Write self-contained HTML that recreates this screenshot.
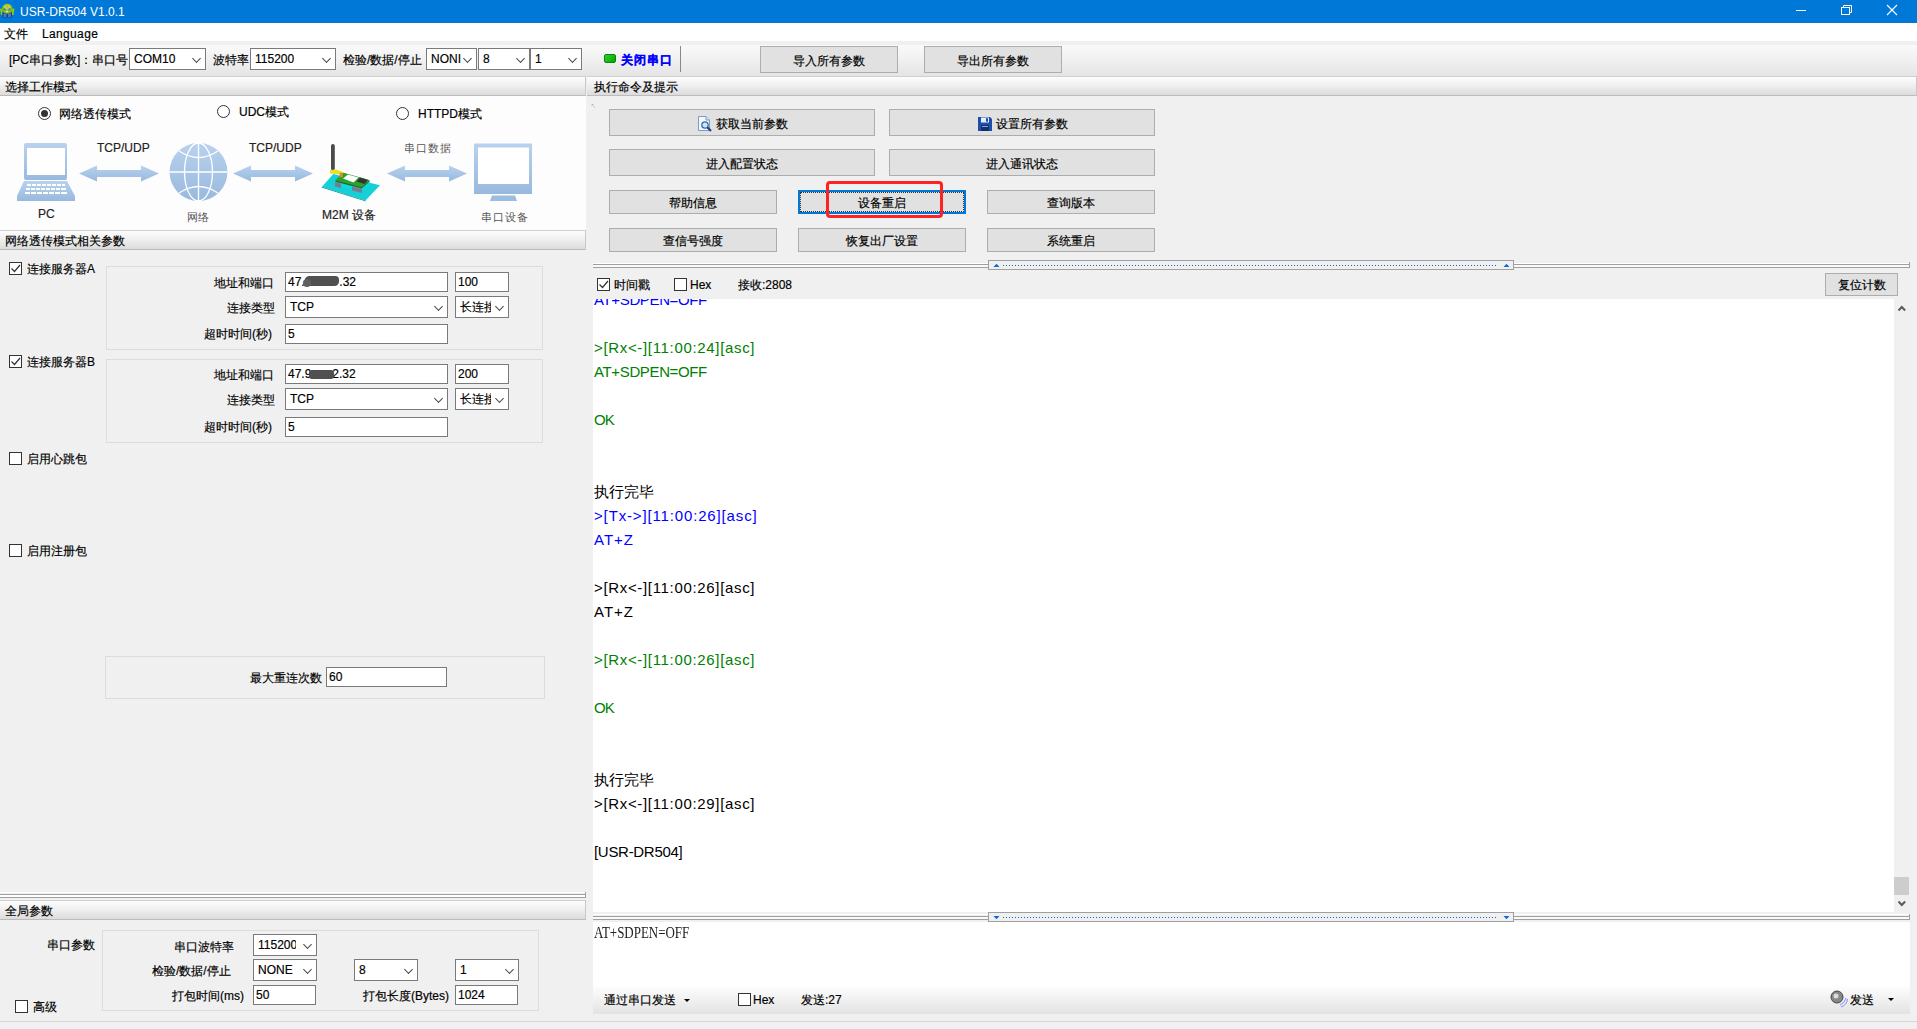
<!DOCTYPE html>
<html><head><meta charset="utf-8">
<style>
*{box-sizing:border-box;margin:0;padding:0}
html,body{width:1917px;height:1029px;overflow:hidden;background:#f0f0f0;font-family:"Liberation Sans",sans-serif;font-size:12px;color:#000;-webkit-text-stroke:.18px}
.a{position:absolute}
.t{position:absolute;white-space:nowrap;line-height:16px}
.hdr{position:absolute;height:20px;background:linear-gradient(#fdfdfd,#f0f0f0 45%,#dcdcdc);border-top:1px solid #d0d0d0;border-bottom:1px solid #bcbcbc;border-right:1px solid #c8c8c8}
.hdr span{position:absolute;left:5px;top:3px;line-height:15px}
.btn{position:absolute;background:#e1e1e1;border:1px solid #adadad;text-align:center;line-height:24px}
.inp{position:absolute;background:#fff;border:1px solid #7a7a7a;line-height:19px;padding-left:2px}
.cmb{position:absolute;background:#fff;border:1px solid #7a7a7a;line-height:20px;padding-left:4px;overflow:hidden;white-space:nowrap}
.cmb i{position:absolute;right:5px;top:6px;width:7px;height:7px;border-right:1px solid #444;border-bottom:1px solid #444;transform:rotate(45deg) scale(.9)}
.chk{position:absolute;width:13px;height:13px;border:1px solid #333;background:#fff}
.grp{position:absolute;border:1px solid #dcdcdc}
.log{position:absolute;left:594px;white-space:nowrap;font-size:15px;line-height:24px;-webkit-text-stroke:0}
.g{color:#008000}.b{color:#0000ff}
</style></head><body>
<!-- title bar -->
<div class="a" style="left:0;top:0;width:1917px;height:23px;background:#0078d7"></div>
<div class="t" style="left:20px;top:4px;color:#fff;font-size:12px;-webkit-text-stroke:0">USR-DR504 V1.0.1</div>
<svg class="a" style="left:0;top:0" width="16" height="20" viewBox="0 0 16 20">
<path d="M0 9 Q1 8 2.5 9.5 V15 L1 15 Z" fill="#8cc820"/>
<path d="M14.5 9 Q13.5 8 12 9.5 V15 L13.5 15 Z" fill="#8cc820"/>
<rect x="2.5" y="12" width="9.5" height="5.5" rx="1" fill="#1a3f8a"/>
<rect x="3.5" y="13.5" width="3" height="3.5" fill="#4a7ac0"/><rect x="8" y="13.5" width="3" height="3.5" fill="#4a7ac0"/>
<ellipse cx="7.3" cy="8.8" rx="5.3" ry="5" fill="#7cc010"/>
<ellipse cx="7.3" cy="7" rx="3.5" ry="2.5" fill="#a8dc50"/>
<rect x="6.3" y="4" width="2" height="3.8" rx="1" fill="#f0a030"/>
<circle cx="4.5" cy="9.3" r="1" fill="#6a5ad0"/><circle cx="9.5" cy="9.3" r="1" fill="#6a5ad0"/>
<ellipse cx="7" cy="11.5" rx="1.4" ry=".7" fill="#e8e0f0"/>
</svg>
<svg class="a" style="left:1790px;top:0" width="120" height="23">
<line x1="6" y1="10.5" x2="16" y2="10.5" stroke="#fff" stroke-width="1"/>
<rect x="51.5" y="7.5" width="8" height="7" fill="none" stroke="#fff" stroke-width="1"/>
<path d="M53.5 7.5 V5.5 H61.5 V12.5 H59.5" fill="none" stroke="#fff" stroke-width="1"/>
<path d="M97 5 L107 15 M107 5 L97 15" stroke="#fff" stroke-width="1.1"/>
</svg>
<!-- menu -->
<div class="a" style="left:0;top:23px;width:1917px;height:18px;background:#fff"></div>
<div class="t" style="left:4px;top:26px">文件</div>
<div class="t" style="left:42px;top:26px;letter-spacing:.35px">Language</div>
<!-- toolbar -->
<div class="a" style="left:0;top:45px;width:1917px;height:31px;background:linear-gradient(#fafafa,#f0f0f0 50%,#e4e4e4)"></div>
<div class="t" style="left:9px;top:52px">[PC串口参数]：串口号</div>
<div class="cmb" style="left:129px;top:48px;width:77px;height:22px">COM10<i></i></div>
<div class="t" style="left:213px;top:52px">波特率</div>
<div class="cmb" style="left:250px;top:48px;width:86px;height:22px">115200<i></i></div>
<div class="t" style="left:343px;top:52px">检验/数据/停止</div>
<div class="cmb" style="left:426px;top:48px;width:51px;height:22px">NONI<i></i></div>
<div class="cmb" style="left:478px;top:48px;width:52px;height:22px">8<i></i></div>
<div class="cmb" style="left:530px;top:48px;width:52px;height:22px">1<i></i></div>
<div class="a" style="left:604px;top:54px;width:12px;height:9px;background:linear-gradient(135deg,#3c3,#0a0);border-radius:2px;border:1px solid #080"></div>
<div class="t" style="left:621px;top:52px;color:#0000ff;font-weight:bold;letter-spacing:1px">关闭串口</div>
<div class="a" style="left:680px;top:46px;width:1px;height:26px;background:#888"></div>
<div class="btn" style="left:760px;top:46px;width:138px;height:27px;line-height:28px">导入所有参数</div>
<div class="btn" style="left:924px;top:46px;width:138px;height:27px;line-height:28px">导出所有参数</div>

<!-- left headers -->
<div class="hdr" style="left:0;top:76px;width:586px"><span>选择工作模式</span></div>
<div class="a" style="left:0;top:96px;width:586px;height:135px;background:#fdfdfd"></div>

<!-- radios -->
<div class="a" style="left:38px;top:107px;width:13px;height:13px;border:1px solid #333;border-radius:50%;background:#fff"></div>
<div class="a" style="left:41px;top:110px;width:7px;height:7px;border-radius:50%;background:#333"></div>
<div class="t" style="left:59px;top:106px">网络透传模式</div>
<div class="a" style="left:217px;top:105px;width:13px;height:13px;border:1px solid #333;border-radius:50%;background:#fff"></div>
<div class="t" style="left:239px;top:104px">UDC模式</div>
<div class="a" style="left:396px;top:107px;width:13px;height:13px;border:1px solid #333;border-radius:50%;background:#fff"></div>
<div class="t" style="left:418px;top:106px">HTTPD模式</div>
<svg class="a" style="left:0;top:96px" width="586" height="134" viewBox="0 96 586 134">
<defs>
<linearGradient id="bl" x1="0" y1="0" x2="0" y2="1"><stop offset="0" stop-color="#b9d2ee"/><stop offset="1" stop-color="#98b9de"/></linearGradient>
</defs>
<!-- laptop -->
<rect x="24" y="143" width="43" height="37" rx="2" fill="url(#bl)"/>
<rect x="27" y="148" width="38" height="27" fill="#fff"/>
<path d="M24 181 H67 L75 196 V201 H17 V196 Z" fill="url(#bl)"/>
<g fill="#fff">
<rect x="27" y="184" width="4" height="2"/><rect x="32" y="184" width="4" height="2"/><rect x="37" y="184" width="4" height="2"/><rect x="42" y="184" width="4" height="2"/><rect x="47" y="184" width="4" height="2"/><rect x="52" y="184" width="4" height="2"/><rect x="57" y="184" width="4" height="2"/><rect x="62" y="184" width="3" height="2"/>
<rect x="26" y="188" width="4" height="2"/><rect x="31" y="188" width="4" height="2"/><rect x="36" y="188" width="4" height="2"/><rect x="41" y="188" width="4" height="2"/><rect x="46" y="188" width="4" height="2"/><rect x="51" y="188" width="4" height="2"/><rect x="56" y="188" width="4" height="2"/><rect x="61" y="188" width="5" height="2"/>
<rect x="25" y="192" width="5" height="2"/><rect x="31" y="192" width="5" height="2"/><rect x="37" y="192" width="5" height="2"/><rect x="43" y="192" width="5" height="2"/><rect x="49" y="192" width="5" height="2"/><rect x="55" y="192" width="5" height="2"/><rect x="61" y="192" width="6" height="2"/>
<rect x="34" y="180" width="24" height="1"/>
</g>
<!-- arrows -->
<path d="M79 173.5 L97 165.5 V170 H141 V165.5 L159 173.5 L141 181.5 V177 H97 V181.5 Z" fill="url(#bl)"/>
<path d="M233 173.5 L251 165.5 V170 H295 V165.5 L313 173.5 L295 181.5 V177 H251 V181.5 Z" fill="url(#bl)"/>
<path d="M387 173.5 L405 165.5 V170 H449 V165.5 L467 173.5 L449 181.5 V177 H405 V181.5 Z" fill="url(#bl)"/>
<!-- globe -->
<circle cx="198.5" cy="172" r="29" fill="url(#bl)"/>
<g fill="none" stroke="#fff" stroke-width="1.3">
<line x1="198.5" y1="143" x2="198.5" y2="201"/>
<line x1="169.5" y1="172" x2="227.5" y2="172"/>
<ellipse cx="198.5" cy="172" rx="14" ry="29"/>
<path d="M179 151 Q198.5 164 218 151"/>
<path d="M179 193 Q198.5 180 218 193"/>
</g>
<!-- M2M device -->
<path d="M333.3 174 L322 186.7 L365.5 200.5 L380 185.2 Z" fill="#16d0d8"/>
<path d="M322 186.7 L365.5 200.5 L366 201.5 L321.5 187.5 Z" fill="#0a9aa0"/>
<path d="M335 181 L361.5 187.5 L369.5 181 V184 L361.5 192 L335 185 Z" fill="#10d8e0"/>
<path d="M335 182 L341 183.5 V188 L335 186.5 Z" fill="#7a7a90"/>
<path d="M352 186.5 L362 189 V193 L352 190.5 Z" fill="#7a7a90"/>
<path d="M335.5 180.3 L342.8 172.5 L369.5 180 L361.8 187 Z" fill="#2ea02e"/>
<path d="M335.5 180.3 L361.8 187 V188.5 L335.5 181.8 Z" fill="#1d701d"/>
<path d="M361.8 187 L369.5 180 V181.5 L361.8 188.5 Z" fill="#1d701d"/>
<path d="M343 178.5 L348 174.5 L358.5 177.5 L353.5 182.5 Z" fill="#fbfbfb"/>
<path d="M356.5 181.5 L360 177.5 L368 180 L364.5 184 Z" fill="#333"/>
<rect x="331" y="144" width="3.8" height="26.5" rx="1.9" fill="#4a4a4a"/>
<path d="M330 170 L336 169.5 L343 172 L343 174.5 L336 174 L330 173.5 Z" fill="#e8e020"/>
<rect x="339.6" y="172.8" width="3.2" height="4.5" fill="#d88a28"/>
<!-- monitor -->
<rect x="474" y="143.5" width="58" height="50.5" fill="url(#bl)"/>
<rect x="478" y="147.5" width="51" height="36.5" fill="#fff"/>
<path d="M492 195.5 H515 L517 201 H490 Z" fill="#9dbde0"/>
</svg>
<div class="t" style="left:97px;top:140px;font-size:12px;color:#222">TCP/UDP</div>
<div class="t" style="left:249px;top:140px;font-size:12px;color:#222">TCP/UDP</div>
<div class="t" style="left:404px;top:140px;font-size:11px;color:#555;letter-spacing:1px;-webkit-text-stroke:0">串口数据</div>
<div class="t" style="left:38px;top:206px;font-size:12px;color:#222">PC</div>
<div class="t" style="left:187px;top:209px;font-size:11px;color:#555;-webkit-text-stroke:0">网络</div>
<div class="t" style="left:322px;top:207px;font-size:12px;color:#222">M2M 设备</div>
<div class="t" style="left:481px;top:209px;font-size:11px;color:#555;letter-spacing:1px;-webkit-text-stroke:0">串口设备</div>
<div class="hdr" style="left:0;top:230px;width:586px"><span>网络透传模式相关参数</span></div>
<div class="hdr" style="left:0;top:900px;width:586px"><span>全局参数</span></div>


<!-- server A -->
<div class="chk" style="left:9px;top:262px"><svg width="11" height="11" style="position:absolute;left:0;top:0"><path d="M1.5 5.5 L4.5 8.5 L10 2" fill="none" stroke="#333" stroke-width="1.2"/></svg></div>
<div class="t" style="left:27px;top:261px">连接服务器A</div>
<div class="grp" style="left:106px;top:266px;width:437px;height:84px"></div>
<div class="t" style="left:214px;top:275px">地址和端口</div>
<div class="inp" style="left:285px;top:272px;width:163px;height:20px">47.9<span style="display:inline-block;width:28px"></span>.32</div>
<div class="a" style="left:305px;top:276px;width:34px;height:10px;background:#505050;border-radius:5px 4px 5px 6px;filter:blur(.7px)"></div>
<div class="a" style="left:303px;top:279px;width:8px;height:8px;background:#606060;border-radius:50%;filter:blur(.6px)"></div>
<div class="inp" style="left:455px;top:272px;width:54px;height:20px">100</div>
<div class="t" style="left:227px;top:300px">连接类型</div>
<div class="cmb" style="left:285px;top:296px;width:163px;height:22px">TCP<i></i></div>
<div class="cmb" style="left:455px;top:296px;width:54px;height:22px;padding-left:4px"><span style="display:inline-block;width:31px;overflow:hidden">长连接</span><i></i></div>
<div class="t" style="left:204px;top:326px">超时时间(秒)</div>
<div class="inp" style="left:285px;top:324px;width:163px;height:20px">5</div>
<!-- server B -->
<div class="chk" style="left:9px;top:355px"><svg width="11" height="11" style="position:absolute;left:0;top:0"><path d="M1.5 5.5 L4.5 8.5 L10 2" fill="none" stroke="#333" stroke-width="1.2"/></svg></div>
<div class="t" style="left:27px;top:354px">连接服务器B</div>
<div class="grp" style="left:106px;top:359px;width:437px;height:84px"></div>
<div class="t" style="left:214px;top:367px">地址和端口</div>
<div class="inp" style="left:285px;top:364px;width:163px;height:20px">47.9<span style="display:inline-block;width:21px"></span>2.32</div>
<div class="a" style="left:309px;top:370px;width:25px;height:9px;background:#505050;border-radius:3px;filter:blur(.5px)"></div>
<div class="inp" style="left:455px;top:364px;width:54px;height:20px">200</div>
<div class="t" style="left:227px;top:392px">连接类型</div>
<div class="cmb" style="left:285px;top:388px;width:163px;height:22px">TCP<i></i></div>
<div class="cmb" style="left:455px;top:388px;width:54px;height:22px;padding-left:4px"><span style="display:inline-block;width:31px;overflow:hidden">长连接</span><i></i></div>
<div class="t" style="left:204px;top:419px">超时时间(秒)</div>
<div class="inp" style="left:285px;top:417px;width:163px;height:20px">5</div>
<!-- heartbeat / register -->
<div class="chk" style="left:9px;top:452px"></div>
<div class="t" style="left:27px;top:451px">启用心跳包</div>
<div class="chk" style="left:9px;top:544px"></div>
<div class="t" style="left:27px;top:543px">启用注册包</div>
<!-- max reconnect -->
<div class="grp" style="left:105px;top:656px;width:440px;height:43px"></div>
<div class="t" style="left:250px;top:670px">最大重连次数</div>
<div class="inp" style="left:326px;top:667px;width:121px;height:20px">60</div>
<!-- splitter -->
<div class="a" style="left:0;top:892px;width:586px;height:1px;background:#fff"></div>
<div class="a" style="left:0;top:894px;width:586px;height:1px;background:#a0a0a0"></div>
<div class="a" style="left:0;top:895px;width:586px;height:2px;background:#fff"></div>
<div class="a" style="left:0;top:897px;width:586px;height:1px;background:#a0a0a0"></div>
<div class="a" style="left:585px;top:892px;width:1px;height:6px;background:#a0a0a0"></div>
<!-- global -->
<div class="t" style="left:47px;top:937px">串口参数</div>
<div class="grp" style="left:102px;top:930px;width:437px;height:81px"></div>
<div class="t" style="left:174px;top:939px">串口波特率</div>
<div class="cmb" style="left:253px;top:934px;width:64px;height:22px;padding-left:4px"><span style="display:inline-block;width:38px;overflow:hidden;vertical-align:top">115200</span><i></i></div>
<div class="t" style="left:152px;top:963px">检验/数据/停止</div>
<div class="cmb" style="left:253px;top:959px;width:64px;height:22px">NONE<i></i></div>
<div class="cmb" style="left:354px;top:959px;width:64px;height:22px">8<i></i></div>
<div class="cmb" style="left:455px;top:959px;width:64px;height:22px">1<i></i></div>
<div class="t" style="left:172px;top:988px">打包时间(ms)</div>
<div class="inp" style="left:253px;top:985px;width:63px;height:20px">50</div>
<div class="t" style="left:363px;top:988px">打包长度(Bytes)</div>
<div class="inp" style="left:455px;top:985px;width:63px;height:20px">1024</div>
<div class="chk" style="left:15px;top:1000px"></div>
<div class="t" style="left:33px;top:999px">高级</div>
<div class="a" style="left:0;top:1021px;width:1917px;height:1px;background:#d6d6d6"></div>
<!-- right header -->
<div class="hdr" style="left:587px;top:76px;width:1330px"><span style="left:7px">执行命令及提示</span></div>


<!-- command buttons -->
<svg class="a" style="left:591px;top:103px" width="6" height="6"><path d="M1 3 V1.5 H2.5 M2.5 3 L4 4.5" fill="none" stroke="#aaa" stroke-width=".8"/></svg>
<div class="btn" style="left:609px;top:109px;width:266px;height:27px;line-height:28px"><svg width="16" height="17" style="vertical-align:-4px;margin-right:3px" viewBox="0 0 16 17"><path d="M1.5 1.5 H9 L12.5 5 V15.5 H1.5 Z" fill="#f4f8fc" stroke="#7a9cc8"/><path d="M9 1.5 V5 H12.5" fill="#dde8f4" stroke="#7a9cc8"/><circle cx="8" cy="10" r="3.2" fill="#cde6f8" stroke="#3a6ab0" stroke-width="1.3"/><path d="M10.3 12.3 L14 16" stroke="#1e3f8a" stroke-width="2.2"/></svg>获取当前参数</div>
<div class="btn" style="left:889px;top:109px;width:266px;height:27px;line-height:28px"><svg width="16" height="16" style="vertical-align:-4px;margin-right:3px" viewBox="0 0 16 16"><path d="M1 1 H13 L15 3 V15 H1 Z" fill="#1d4fa8"/><rect x="4" y="1.5" width="8" height="5" fill="#e8eef8"/><rect x="4" y="9" width="8" height="6" fill="#0f2f70"/><rect x="9" y="2.2" width="2" height="3.5" fill="#1d4fa8"/><rect x="5" y="10" width="6" height="1" fill="#8aa8d8"/></svg>设置所有参数</div>
<div class="btn" style="left:609px;top:149px;width:266px;height:27px;line-height:28px">进入配置状态</div>
<div class="btn" style="left:889px;top:149px;width:266px;height:27px;line-height:28px">进入通讯状态</div>
<div class="btn" style="left:609px;top:190px;width:168px;height:24px">帮助信息</div>
<div class="btn" style="left:798px;top:190px;width:168px;height:24px;border:2px solid #0078d7;line-height:22px"><div class="a" style="left:0;top:0;right:0;bottom:0;border:1px dotted #333"></div>设备重启</div>
<div class="btn" style="left:987px;top:190px;width:168px;height:24px">查询版本</div>
<div class="btn" style="left:609px;top:228px;width:168px;height:24px">查信号强度</div>
<div class="btn" style="left:798px;top:228px;width:168px;height:24px">恢复出厂设置</div>
<div class="btn" style="left:987px;top:228px;width:168px;height:24px">系统重启</div>
<!-- red highlight -->
<div class="a" style="left:826px;top:181px;width:117px;height:37px;border:3px solid #f22;border-radius:4px"></div>
<!-- top splitter -->
<div class="a" style="left:593px;top:263px;width:1317px;height:1px;background:#fff"></div>
<div class="a" style="left:593px;top:264px;width:1317px;height:1px;background:#a0a0a0"></div>
<div class="a" style="left:593px;top:265px;width:1317px;height:2px;background:#fafafa"></div>
<div class="a" style="left:593px;top:267px;width:1317px;height:1px;background:#a0a0a0"></div>
<div class="a" style="left:1909px;top:262px;width:1px;height:6px;background:#a0a0a0"></div>
<div class="a" style="left:988px;top:260px;width:526px;height:10px;background:#f0f0f0;border:1px solid #a0a0a0"></div>
<div class="a" style="left:1003px;top:265px;width:494px;height:1px;background:repeating-linear-gradient(90deg,#0a6ad8 0,#0a6ad8 1px,transparent 1px,transparent 3px)"></div>
<svg class="a" style="left:993px;top:263px" width="8" height="5"><path d="M0.5 4 H6.5 L3.5 0.8 Z" fill="#0a6ad8"/></svg>
<svg class="a" style="left:1503px;top:263px" width="8" height="5"><path d="M0.5 4 H6.5 L3.5 0.8 Z" fill="#0a6ad8"/></svg>
<!-- receive toolbar -->
<div class="chk" style="left:597px;top:278px"><svg width="11" height="11" style="position:absolute;left:0;top:0"><path d="M1.5 5.5 L4.5 8.5 L10 2" fill="none" stroke="#333" stroke-width="1.2"/></svg></div>
<div class="t" style="left:614px;top:277px">时间戳</div>
<div class="chk" style="left:674px;top:278px"></div>
<div class="t" style="left:690px;top:277px">Hex</div>
<div class="t" style="left:738px;top:277px">接收:2808</div>
<div class="btn" style="left:1825px;top:273px;width:73px;height:23px;line-height:23px">复位计数</div>
<div class="a" style="left:593px;top:299px;width:1301px;height:613px;background:#fff;overflow:hidden">
<div class="log b" style="left:1px;top:-11px;letter-spacing:-0.36px">AT+SDPEN=OFF</div>
<div class="log g" style="left:1px;top:37px;letter-spacing:0.67px">&gt;[Rx&lt;-][11:00:24][asc]</div>
<div class="log g" style="left:1px;top:61px;letter-spacing:-0.36px">AT+SDPEN=OFF</div>
<div class="log g" style="left:1px;top:109px;letter-spacing:-1px">OK</div>
<div class="log " style="left:1px;top:181px">执行完毕</div>
<div class="log b" style="left:1px;top:205px;letter-spacing:0.85px">&gt;[Tx-&gt;][11:00:26][asc]</div>
<div class="log b" style="left:1px;top:229px;letter-spacing:1px">AT+Z</div>
<div class="log " style="left:1px;top:277px;letter-spacing:0.67px">&gt;[Rx&lt;-][11:00:26][asc]</div>
<div class="log " style="left:1px;top:301px;letter-spacing:1px">AT+Z</div>
<div class="log g" style="left:1px;top:349px;letter-spacing:0.67px">&gt;[Rx&lt;-][11:00:26][asc]</div>
<div class="log g" style="left:1px;top:397px;letter-spacing:-1px">OK</div>
<div class="log " style="left:1px;top:469px">执行完毕</div>
<div class="log " style="left:1px;top:493px;letter-spacing:0.67px">&gt;[Rx&lt;-][11:00:29][asc]</div>
<div class="log " style="left:1px;top:541px;letter-spacing:-0.3px">[USR-DR504]</div>
</div>

<div class="a" style="left:1894px;top:299px;width:16px;height:613px;background:#f0f0f0"></div>
<svg class="a" style="left:1897px;top:304px" width="10" height="8"><path d="M1.5 6.5 L4.8 3 L8.1 6.5" fill="none" stroke="#5a5a5a" stroke-width="2"/></svg>
<div class="a" style="left:1894px;top:877px;width:15px;height:18px;background:#cdcdcd"></div>
<svg class="a" style="left:1897px;top:900px" width="10" height="8"><path d="M1.5 1.5 L4.8 5 L8.1 1.5" fill="none" stroke="#5a5a5a" stroke-width="2"/></svg>
<!-- bottom splitter -->
<div class="a" style="left:593px;top:914px;width:1317px;height:1px;background:#fff"></div>
<div class="a" style="left:593px;top:916px;width:1317px;height:1px;background:#a0a0a0"></div>
<div class="a" style="left:593px;top:917px;width:1317px;height:2px;background:#fafafa"></div>
<div class="a" style="left:593px;top:919px;width:1317px;height:1px;background:#a0a0a0"></div>
<div class="a" style="left:1909px;top:914px;width:1px;height:6px;background:#a0a0a0"></div>
<div class="a" style="left:988px;top:912px;width:526px;height:10px;background:#f0f0f0;border:1px solid #a0a0a0"></div>
<div class="a" style="left:1003px;top:917px;width:494px;height:1px;background:repeating-linear-gradient(90deg,#0a6ad8 0,#0a6ad8 1px,transparent 1px,transparent 3px)"></div>
<svg class="a" style="left:993px;top:915px" width="8" height="5"><path d="M0.5 1 H6.5 L3.5 4.2 Z" fill="#0a6ad8"/></svg>
<svg class="a" style="left:1503px;top:915px" width="8" height="5"><path d="M0.5 1 H6.5 L3.5 4.2 Z" fill="#0a6ad8"/></svg>
<!-- send area -->
<div class="a" style="left:593px;top:922px;width:1317px;height:92px;background:linear-gradient(#fff 0,#fff 63px,#f2f2f2 76px,#e3e3e3 92px)"></div>
<div class="t" style="left:594px;top:925px;font-family:'Liberation Serif',serif;font-size:16px;line-height:16px;color:#222;transform:scaleX(.81);transform-origin:0 0;-webkit-text-stroke:0">AT+SDPEN=OFF</div>
<div class="t" style="left:604px;top:992px">通过串口发送</div>
<div class="a" style="left:684px;top:999px;width:0;height:0;border-left:3px solid transparent;border-right:3px solid transparent;border-top:3px solid #000"></div>
<div class="chk" style="left:738px;top:993px"></div>
<div class="t" style="left:753px;top:992px">Hex</div>
<div class="t" style="left:801px;top:992px">发送:27</div>
<svg class="a" style="left:1830px;top:990px" width="18" height="18" viewBox="0 0 18 18"><circle cx="7" cy="7" r="6" fill="#888" stroke="#444"/><circle cx="6" cy="6" r="2.5" fill="#ddd"/><path d="M10 15 Q15 13 16 8 M11 17 Q17 15 17.5 9" fill="none" stroke="#88f" stroke-width="1"/></svg>
<div class="t" style="left:1850px;top:992px">发送</div>
<div class="a" style="left:1888px;top:998px;width:0;height:0;border-left:3px solid transparent;border-right:3px solid transparent;border-top:3px solid #000"></div>
</body></html>
